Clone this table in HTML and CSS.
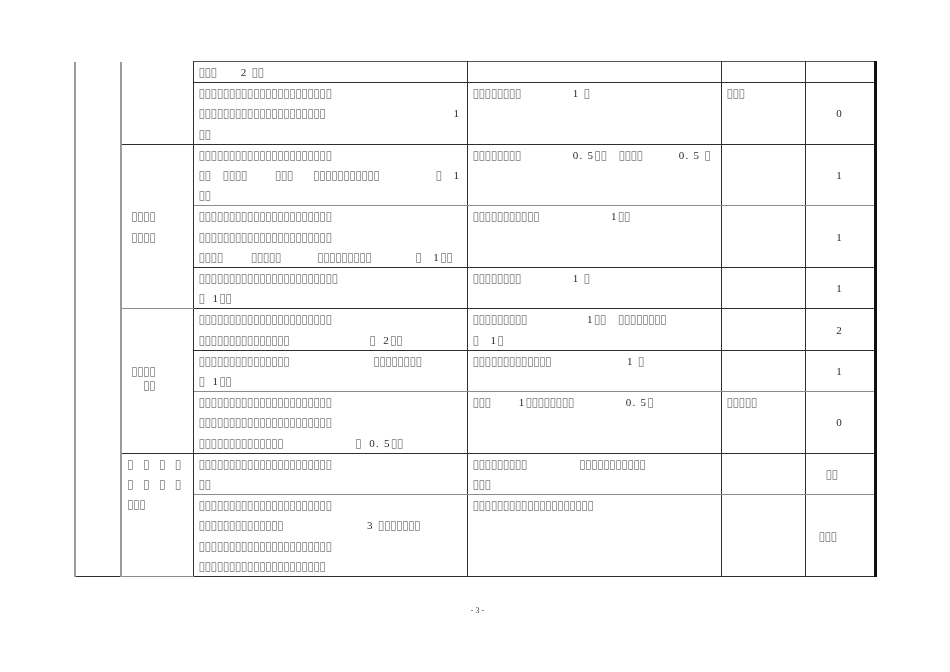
FILE: index.html
```html
<!DOCTYPE html>
<html lang="zh">
<head>
<meta charset="utf-8">
<title>评分表 第3页</title>
<link rel="stylesheet" href="styles.css">
</head>
<body>
<div class="sheet">
<div class="wrap">
<table class="grid">
<colgroup><col class="w1"><col class="w2"><col class="w3"><col class="w4"><col class="w5"><col class="w6"></colgroup>
<tbody>
<tr>
<td class="c1" rowspan="10"></td>
<td class="c2" rowspan="2"></td>
<td><span class="t">▯▯▯</span>      2 <span class="t">▯▯</span></td>
<td></td>
<td></td>
<td class="num"></td>
</tr>
<tr>
<td><span class="t">▯▯▯▯▯▯▯▯▯▯▯▯▯▯▯▯▯▯▯▯▯▯</span><br><span class="t">▯▯▯▯▯▯▯▯▯▯▯▯▯▯▯▯▯▯▯▯▯</span>                                1<br><span class="t">▯▯</span></td>
<td><span class="t">▯▯▯▯▯▯▯▯</span>             1 <span class="t">▯</span></td>
<td><span class="t">▯▯▯</span></td>
<td class="num">0</td>
</tr>
<tr class="gb">
<td class="c2 mid" rowspan="3"> <span class="t">▯▯▯▯</span><br> <span class="t">▯▯▯▯</span></td>
<td><span class="t">▯▯▯▯▯▯▯▯▯▯▯▯▯▯▯▯▯▯▯▯▯▯</span><br><span class="t">▯▯</span>   <span class="t">▯▯▯▯</span>       <span class="t">▯▯▯</span>     <span class="t">▯▯▯▯▯▯▯▯▯▯▯</span>              <span class="t">▯</span>   1<br><span class="t">▯▯</span></td>
<td><span class="t">▯▯▯▯▯▯▯▯</span>             0. 5<span class="t">▯▯</span>   <span class="t">▯▯▯▯</span>         0. 5 <span class="t">▯</span></td>
<td></td>
<td class="num">1</td>
</tr>
<tr>
<td><span class="t">▯▯▯▯▯▯▯▯▯▯▯▯▯▯▯▯▯▯▯▯▯▯</span><br><span class="t">▯▯▯▯▯▯▯▯▯▯▯▯▯▯▯▯▯▯▯▯▯▯</span><br><span class="t">▯▯▯▯</span>       <span class="t">▯▯▯▯▯</span>         <span class="t">▯▯▯▯▯▯▯▯▯</span>           <span class="t">▯</span>   1<span class="t">▯▯</span></td>
<td><span class="t">▯▯▯▯▯▯▯▯▯▯▯</span>                  1<span class="t">▯▯</span></td>
<td></td>
<td class="num">1</td>
</tr>
<tr>
<td><span class="t">▯▯▯▯▯▯▯▯▯▯▯▯▯▯▯▯▯▯▯▯▯▯▯</span><br><span class="t">▯</span>  1<span class="t">▯▯</span></td>
<td><span class="t">▯▯▯▯▯▯▯▯</span>             1 <span class="t">▯</span></td>
<td></td>
<td class="num">1</td>
</tr>
<tr>
<td class="c2 mid tight" rowspan="3"> <span class="t">▯▯▯▯</span><br>    <span class="t">▯▯</span></td>
<td><span class="t">▯▯▯▯▯▯▯▯▯▯▯▯▯▯▯▯▯▯▯▯▯▯</span><br><span class="t">▯▯▯▯▯▯▯▯▯▯▯▯▯▯▯</span>                    <span class="t">▯</span>  2<span class="t">▯▯</span></td>
<td><span class="t">▯▯▯▯▯▯▯▯▯</span>               1<span class="t">▯▯</span>   <span class="t">▯▯▯▯▯▯▯▯</span><br><span class="t">▯</span>   1<span class="t">▯</span></td>
<td></td>
<td class="num">2</td>
</tr>
<tr class="gb">
<td><span class="t">▯▯▯▯▯▯▯▯▯▯▯▯▯▯▯</span>                     <span class="t">▯▯▯▯▯▯▯▯</span><br><span class="t">▯</span>  1<span class="t">▯▯</span></td>
<td><span class="t">▯▯▯▯▯▯▯▯▯▯▯▯▯</span>                   1 <span class="t">▯</span></td>
<td></td>
<td class="num">1</td>
</tr>
<tr>
<td><span class="t">▯▯▯▯▯▯▯▯▯▯▯▯▯▯▯▯▯▯▯▯▯▯</span><br><span class="t">▯▯▯▯▯▯▯▯▯▯▯▯▯▯▯▯▯▯▯▯▯▯</span><br><span class="t">▯▯▯▯▯▯▯▯▯▯▯▯▯▯</span>                  <span class="t">▯</span>  0. 5<span class="t">▯▯</span></td>
<td><span class="t">▯▯▯</span>       1<span class="t">▯▯▯▯▯▯▯▯</span>             0. 5<span class="t">▯</span></td>
<td><span class="t">▯▯▯▯▯</span></td>
<td class="num">0</td>
</tr>
<tr class="gb">
<td class="c2" rowspan="2"><span class="t wide">▯▯▯▯</span><br><span class="t wide">▯▯▯▯</span><br><span class="t">▯▯▯</span></td>
<td><span class="t">▯▯▯▯▯▯▯▯▯▯▯▯▯▯▯▯▯▯▯▯▯▯</span><br><span class="t">▯▯</span></td>
<td><span class="t">▯▯▯▯▯▯▯▯▯</span>             <span class="t">▯▯▯▯▯▯▯▯▯▯▯</span><br><span class="t">▯▯▯</span></td>
<td></td>
<td class="num"><span class="t">▯▯</span>    </td>
</tr>
<tr class="last">
<td><span class="t">▯▯▯▯▯▯▯▯▯▯▯▯▯▯▯▯▯▯▯▯▯▯</span><br><span class="t">▯▯▯▯▯▯▯▯▯▯▯▯▯▯</span>                     3 <span class="t">▯▯▯▯▯▯▯</span><br><span class="t">▯▯▯▯▯▯▯▯▯▯▯▯▯▯▯▯▯▯▯▯▯▯</span><br><span class="t">▯▯▯▯▯▯▯▯▯▯▯▯▯▯▯▯▯▯▯▯▯</span></td>
<td><span class="t">▯▯▯▯▯▯▯▯▯▯▯▯▯▯▯▯▯▯▯▯</span></td>
<td></td>
<td class="num"><span class="t">▯▯▯</span>      </td>
</tr>
</tbody>
</table>
</div>
<div class="folio">- 3 -</div>
</div>
</body>
</html>
```

FILE: styles.css
```css
html, body {
  margin: 0;
  padding: 0;
  background: #ffffff;
}

.sheet {
  width: 950px;
  padding-top: 61px;
  filter: grayscale(100%);
}

.wrap {
  padding-left: 74px;
}

.grid {
  border-collapse: collapse;
  table-layout: fixed;
  width: 800px;
  font-family: "Liberation Serif", "DejaVu Serif", serif;
  font-size: 11px;
  line-height: 20.2px;
  letter-spacing: 1.25px;
  color: #2a2a2a;
}

.w1 { width: 46px; }
.w2 { width: 72px; }
.w3 { width: 274px; }
.w4 { width: 254px; }
.w5 { width: 84px; }
.w6 { width: 70px; }

.grid td {
  border: 1px solid #2e2e2e;
  padding: 0 0 0 5px;
  vertical-align: top;
  white-space: pre;
  overflow: hidden;
}

.grid td.c1 {
  border-top: none;
  border-left: 2px solid #9a9a9a;
  border-right: 2px solid #9a9a9a;
  border-bottom: 1px solid #2e2e2e;
}

.grid td.c2 {
  border-top: none;
  padding-left: 5px;
}

.grid tr:first-child td {
  border-top: 1px solid #555555;
}

.grid tr:first-child td.c1,
.grid tr:first-child td.c2 {
  border-top: none;
}

.grid td.mid {
  vertical-align: middle;
}

.grid td.tight {
  line-height: 14.5px;
  padding-bottom: 6px;
}

.grid td.num {
  text-align: center;
  vertical-align: middle;
  padding: 0;
  border-right: 3px solid #111111;
}

.grid tr.gb td {
  border-bottom-color: #8c8c8c;
}

.t {
  font-family: "DejaVu Sans", sans-serif;
  font-size: 12px;
  line-height: 10px;
  letter-spacing: -0.56px;
  color: #7a7a7a;
}

.t.wide {
  letter-spacing: 9.34px;
}

.folio {
  text-align: center;
  margin-top: 28px;
  padding-left: 5px;
  font-family: "Liberation Serif", serif;
  font-size: 8px;
  line-height: 12px;
  color: #444444;
}
```
